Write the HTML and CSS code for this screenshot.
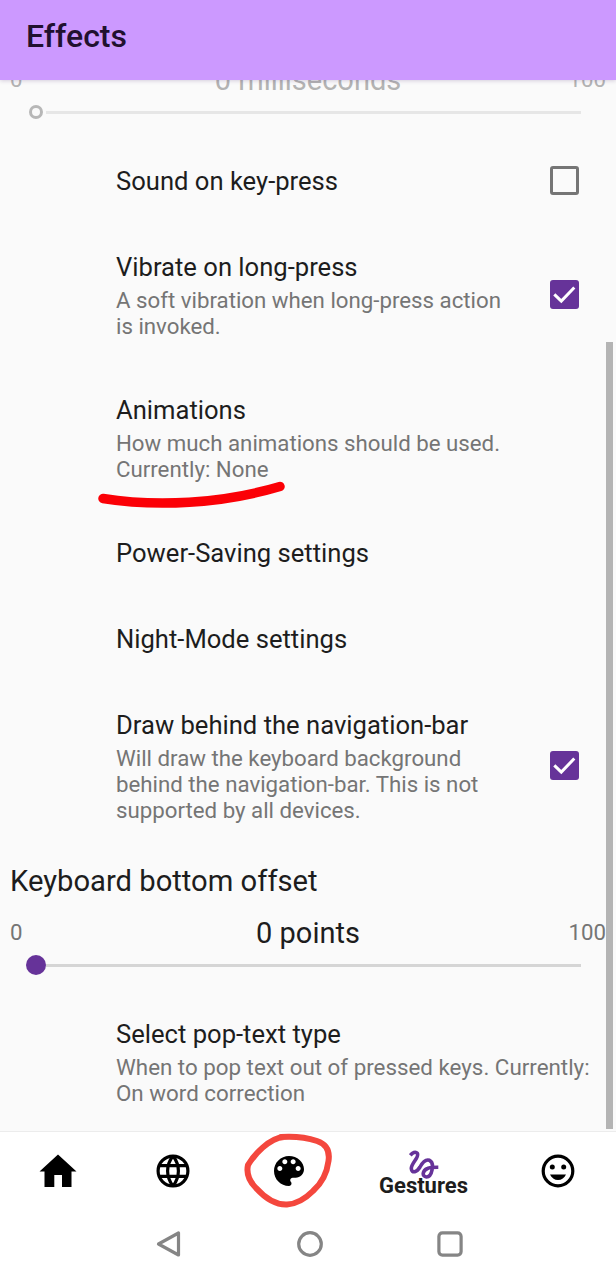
FILE: index.html
```html
<!DOCTYPE html>
<html lang="en">
<head>
<meta charset="utf-8">
<title>Effects</title>
<link rel="stylesheet" href="styles.css">
</head>
<body>
<div class="screen">
  <header class="app-bar"><h1>Effects</h1></header>
  <main class="content">
    <section class="slider slider-disabled">
      <div class="slider-labels"><span class="bound">0</span><span class="value">0 milliseconds</span><span class="bound right">100</span></div>
      <div class="track"><span class="thumb"></span><span class="line"></span></div>
    </section>
    <div class="row">
      <div class="text"><div class="title">Sound on key-press</div></div>
      <span class="check"></span>
    </div>
    <div class="row two">
      <div class="text"><div class="title">Vibrate on long-press</div><div class="sub">A soft vibration when long-press action<br>is invoked.</div></div>
      <span class="check on"><svg viewBox="0 0 29 29"><path d="M4.300 14.300l7 6.800L24.300 7.500"/></svg></span>
    </div>
    <div class="row two">
      <div class="text"><div class="title">Animations</div><div class="sub">How much animations should be used.<br>Currently: None</div></div>
      <svg class="underline" viewBox="0 0 190 32"><path d="M7 15.500C60 24 125 21 184 3.500"/></svg>
    </div>
    <div class="row"><div class="text"><div class="title">Power-Saving settings</div></div></div>
    <div class="row"><div class="text"><div class="title">Night-Mode settings</div></div></div>
    <div class="row three">
      <div class="text"><div class="title">Draw behind the navigation-bar</div><div class="sub">Will draw the keyboard background<br>behind the navigation-bar. This is not<br>supported by all devices.</div></div>
      <span class="check on"><svg viewBox="0 0 29 29"><path d="M4.300 14.300l7 6.800L24.300 7.500"/></svg></span>
    </div>
    <section class="slider">
      <h2>Keyboard bottom offset</h2>
      <div class="slider-labels"><span class="bound">0</span><span class="value">0 points</span><span class="bound right">100</span></div>
      <div class="track"><span class="thumb"></span><span class="line"></span></div>
    </section>
    <div class="row two last">
      <div class="text"><div class="title">Select pop-text type</div><div class="sub">When to pop text out of pressed keys. Currently:<br>On word correction</div></div>
    </div>
    <span class="scrollbar"></span>
  </main>
  <nav class="tabs">
    <div class="tab"><svg width="38" height="34" viewBox="0 0 38 34"><path d="M19 0.500L37.500 17.500H32.500V33H23V21H15.300V33H5.500V17.500H0.500Z"/></svg></div>
    <div class="tab"><svg width="34" height="34" viewBox="0 0 34 34" fill="none" stroke="#000" stroke-width="3.200"><circle cx="17" cy="17" r="14.900"/><path d="M3 11.700H31M3 22.300H31M17 2C9.800 11 9.800 23 17 32M17 2C24.200 11 24.200 23 17 32"/></svg></div>
    <div class="tab"><svg width="30" height="30" viewBox="3 3 18 18"><path d="M12 3c-4.970 0-9 4.030-9 9s4.030 9 9 9c.83 0 1.500-.67 1.500-1.500 0-.39-.15-.74-.39-1.010-.23-.26-.38-.61-.38-.99 0-.83.67-1.500 1.500-1.500H16c2.760 0 5-2.240 5-5 0-4.420-4.030-8-9-8zm-5.500 9c-.83 0-1.500-.67-1.500-1.500S5.670 9 6.500 9 8 9.670 8 10.500 7.330 12 6.500 12zm3-4C8.670 8 8 7.330 8 6.500S8.670 5 9.500 5s1.500.67 1.500 1.500S10.330 8 9.500 8zm5 0c-.83 0-1.500-.67-1.500-1.500S13.670 5 14.500 5s1.500.67 1.500 1.500S15.330 8 14.500 8zm3 4c-.83 0-1.500-.67-1.500-1.500S16.670 9 17.500 9s1.500.67 1.500 1.500-.67 1.500-1.500 1.500z"/></svg>
      <svg class="ring" viewBox="0 0 90 78"><path d="M37 6C51 5 64 7 73 10C82 13 86 20 84.500 30C83 42 78 52 69 60C61 68 53 73 43 73.500C31 74 21 67 12 57C5 50 2 43 4 34C10 24 25 7 40 6"/></svg>
    </div>
    <div class="tab wide"><svg width="30" height="30" viewBox="0 0 30 30" fill="none" stroke="#663399" stroke-width="3.600"><path d="M1.300 5.300C3.500 2.500 6.500 1.300 8.300 3.300C10.800 7 2.300 13 2.300 18.500C2.800 24 8 22 11 17C14 11.500 17 9 20.500 10.300C26 13 23 27 17.500 27C12.500 26.500 13.500 20.500 18.500 18.500C21.500 17.200 24 17.300 29.300 17.300"/></svg><span>Gestures</span></div>
    <div class="tab"><svg width="34" height="34" viewBox="0 0 34 34"><circle cx="17" cy="17" r="14.800" fill="none" stroke="#000" stroke-width="3.200"/><circle cx="11.300" cy="13" r="2.500"/><circle cx="22.700" cy="13" r="2.500"/><path d="M9 20.500H25C23.500 24 20.500 26 17 26S10.500 24 9 20.500Z"/></svg></div>
  </nav>
  <footer class="system-bar">
    <svg width="26" height="28" viewBox="0 0 26 28"><path d="M2.500 14L22.500 3V25Z"/></svg>
    <svg width="28" height="28" viewBox="0 0 28 28"><circle cx="14" cy="14" r="11.300"/></svg>
    <svg width="28" height="28" viewBox="0 0 28 28"><rect x="2.900" y="2.900" width="22.200" height="22.200" rx="3.500"/></svg>
  </footer>
</div>
</body>
</html>
```
FILE: styles.css
```css
* { box-sizing: border-box; }
body { margin: 0; background: #fff; font-family: Roboto, sans-serif; color: #1d1d1d; }
.screen { display: flex; flex-direction: column; width: 616px; height: 1280px; overflow: hidden; }
.app-bar { position: relative; z-index: 1; flex: none; display: flex; align-items: center; height: 80px; padding: 0 26px 8px; background: #cc99ff; box-shadow: 0 1px 4px rgba(80, 50, 120, .22); }
h1 { margin: 0; font-size: 32px; line-height: 38px; font-weight: 500; color: #21102f; }
.content { position: relative; flex: none; height: 1052px; overflow: hidden; background: #fafafa; border-bottom: 1px solid #ececec; }
.row { position: relative; display: flex; align-items: center; height: 86px; padding-left: 116px; padding-right: 37px; }
.two { height: 143px; }
.three { height: 169px; }
.text { flex: 1; min-width: 0; white-space: nowrap; }
.title { font-size: 25.600px; line-height: 31px; }
.sub { margin-top: 3.500px; font-size: 22.250px; line-height: 26.100px; color: #757575; }
.last .sub { font-size: 22.350px; }
.check { flex: none; width: 29px; height: 29px; border: 3px solid #757575; border-radius: 3px; margin-top: -2px; }
.check.on { border: 0; background: #663399; }
.check svg { display: block; width: 29px; height: 29px; fill: none; stroke: #fff; stroke-width: 3; }
.slider { height: 140px; padding: 13px 10px 0; }
.slider-disabled { display: flow-root; height: 58px; padding-top: 0; }
.slider-disabled .slider-labels { margin-top: -18px; color: #b3b3b3; }
h2 { margin: 0 0 16px; font-size: 29.200px; line-height: 35px; font-weight: 400; }
.slider-labels { display: grid; grid-template-columns: 60px 1fr 60px; align-items: center; height: 35px; }
.value { font-size: 29px; text-align: center; }
.bound { font-size: 22.250px; color: #757575; margin-top: -1px; }
.slider-disabled .bound { color: #b3b3b3; }
.right { text-align: right; }
.track { display: flex; align-items: center; height: 20px; margin-top: 5px; padding: 0 25px 0 16px; }
.thumb { width: 20px; height: 20px; border-radius: 50%; background: #663399; }
.line { flex: 1; height: 3px; background: #d5d5d5; }
.slider-disabled .thumb { width: 14px; height: 14px; margin: 0 3px; border: 3.500px solid #b7b7b7; background: none; }
.slider-disabled .line { background: #e6e6e6; }
.underline { position: absolute; left: 95.500px; top: 116px; width: 190px; height: 32px; overflow: visible; fill: none; stroke: #fb0006; stroke-width: 9.500; stroke-linecap: round; }
.scrollbar { position: absolute; right: 3px; top: 262px; width: 7px; height: 787px; background: #b4b4b4; }
.tabs { flex: none; display: flex; height: 77px; }
.tab { position: relative; width: 115.500px; display: flex; align-items: center; justify-content: center; }
.wide { width: 154px; flex-direction: column; padding-top: 6px; }
.wide svg { margin-top: 2px; margin-bottom: -7px; }
.wide span { position: relative; font-size: 22px; line-height: 26px; font-weight: 700; }
.tab .ring { position: absolute; left: 12.500px; top: -1px; width: 90px; height: 78px; fill: none; stroke: #f4473d; stroke-width: 6; stroke-linecap: round; stroke-linejoin: round; }
.system-bar { flex: 1; display: grid; grid-template-columns: repeat(3, 140.700px); justify-content: center; justify-items: center; align-items: center; padding: 0 0 1px 3px; }
.system-bar svg { fill: none; stroke: #858585; stroke-width: 3.200; stroke-linejoin: round; }
```
